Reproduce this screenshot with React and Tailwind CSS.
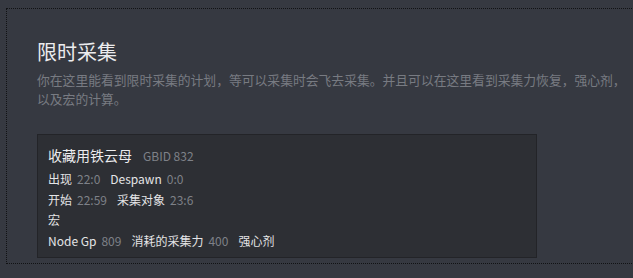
const font = { fontFamily: '"Noto Sans CJK SC", "Noto Sans", sans-serif' };

function Field({ label, value }) {
  return (
    <span className="inline-flex items-baseline gap-[5px]">
      <span className="text-[#e4e4e6]">{label}</span>
      {value !== undefined && <span className="text-[#7e8188]">{value}</span>}
    </span>
  );
}

function Row({ children }) {
  return <div className="flex items-baseline gap-[10px] leading-[20.5px]">{children}</div>;
}

export default function App() {
  return (
    <div className="w-full h-[278px] overflow-hidden bg-[#363941] pt-[8px]" style={font}>
      <div className="ml-[6px] w-[680px] border border-r-0 border-dotted border-[#111214] pl-[30px] pt-[29px] pb-[5px]">
        <h1 className="text-[20px] leading-[28px] text-[#ececee] font-normal">限时采集</h1>
        <p className="mt-[4px] w-[590px] text-[12.8px] leading-[19px] text-[#787b82]">
          你在这里能看到限时采集的计划，等可以采集时会飞去采集。并且可以在这里看到采集力恢复，强心剂，以及宏的计算。
        </p>

        <div className="mt-[26px] w-[500px] bg-[#2d2f34] border border-[#232428] pl-[10px] pt-[9px] pb-[6px] text-[12px]">
          <div className="flex items-baseline gap-[11px] leading-[22px] mb-[2px]">
            <span className="text-[14px] text-[#ececee]">收藏用铁云母</span>
            <span className="text-[12px] text-[#7e8188]">GBID 832</span>
          </div>
          <Row>
            <Field label="出现" value="22:0" />
            <Field label="Despawn" value="0:0" />
          </Row>
          <Row>
            <Field label="开始" value="22:59" />
            <Field label="采集对象" value="23:6" />
          </Row>
          <Row>
            <Field label="宏" />
          </Row>
          <Row>
            <Field label="Node Gp" value="809" />
            <Field label="消耗的采集力" value="400" />
            <Field label="强心剂" />
          </Row>
        </div>
      </div>
    </div>
  );
}
